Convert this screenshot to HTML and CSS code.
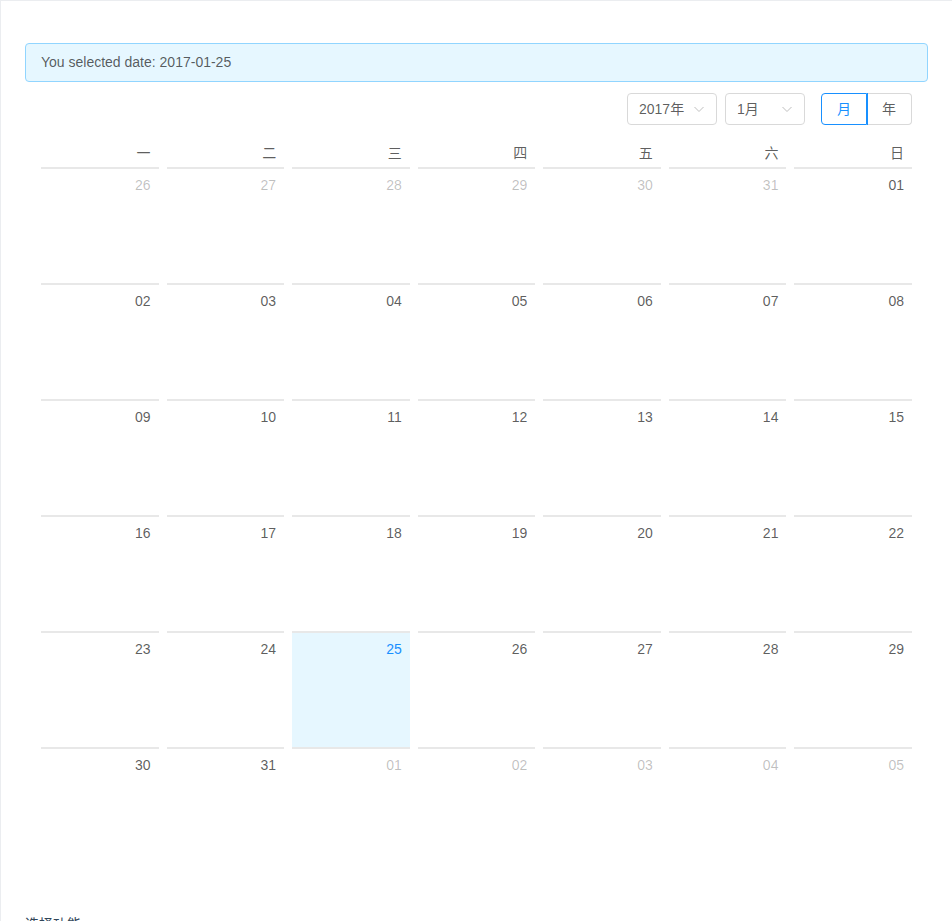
FILE: index.html
```html
<!DOCTYPE html>
<html lang="zh">
<head>
<meta charset="utf-8">
<title>Calendar</title>
<link rel="stylesheet" href="styles.css">
</head>
<body>
<div class="box">
  <div class="alert">You selected date: 2017-01-25</div>
  <div class="calendar">
    <div class="cal-header">
      <div class="select year-select"><span>2017年</span><svg class="arrow" viewBox="0 0 12 12"><path d="M1.5 4 L6 8.5 L10.5 4" fill="none" stroke="#bfbfbf" stroke-width="1"/></svg></div>
      <div class="select month-select"><span>1月</span><svg class="arrow" viewBox="0 0 12 12"><path d="M1.5 4 L6 8.5 L10.5 4" fill="none" stroke="#bfbfbf" stroke-width="1"/></svg></div>
      <div class="radio-group">
        <span class="radio-btn checked">月</span><span class="radio-btn">年</span>
      </div>
    </div>
    <div class="cal-body">
      <div class="grid">
        <div class="wd">一</div><div class="wd">二</div><div class="wd">三</div><div class="wd">四</div><div class="wd">五</div><div class="wd">六</div><div class="wd">日</div>

        <div class="cell other"><div class="val">26</div></div>
        <div class="cell other"><div class="val">27</div></div>
        <div class="cell other"><div class="val">28</div></div>
        <div class="cell other"><div class="val">29</div></div>
        <div class="cell other"><div class="val">30</div></div>
        <div class="cell other"><div class="val">31</div></div>
        <div class="cell"><div class="val">01</div></div>

        <div class="cell"><div class="val">02</div></div>
        <div class="cell"><div class="val">03</div></div>
        <div class="cell"><div class="val">04</div></div>
        <div class="cell"><div class="val">05</div></div>
        <div class="cell"><div class="val">06</div></div>
        <div class="cell"><div class="val">07</div></div>
        <div class="cell"><div class="val">08</div></div>

        <div class="cell"><div class="val">09</div></div>
        <div class="cell"><div class="val">10</div></div>
        <div class="cell"><div class="val">11</div></div>
        <div class="cell"><div class="val">12</div></div>
        <div class="cell"><div class="val">13</div></div>
        <div class="cell"><div class="val">14</div></div>
        <div class="cell"><div class="val">15</div></div>

        <div class="cell"><div class="val">16</div></div>
        <div class="cell"><div class="val">17</div></div>
        <div class="cell"><div class="val">18</div></div>
        <div class="cell"><div class="val">19</div></div>
        <div class="cell"><div class="val">20</div></div>
        <div class="cell"><div class="val">21</div></div>
        <div class="cell"><div class="val">22</div></div>

        <div class="cell"><div class="val">23</div></div>
        <div class="cell"><div class="val">24</div></div>
        <div class="cell selected"><div class="val">25</div></div>
        <div class="cell"><div class="val">26</div></div>
        <div class="cell"><div class="val">27</div></div>
        <div class="cell"><div class="val">28</div></div>
        <div class="cell"><div class="val">29</div></div>

        <div class="cell"><div class="val">30</div></div>
        <div class="cell"><div class="val">31</div></div>
        <div class="cell other"><div class="val">01</div></div>
        <div class="cell other"><div class="val">02</div></div>
        <div class="cell other"><div class="val">03</div></div>
        <div class="cell other"><div class="val">04</div></div>
        <div class="cell other"><div class="val">05</div></div>
      </div>
    </div>
  </div>
  <div class="meta-title">选择功能<span class="meta-icon">ዓ</span></div>
</div>
</body>
</html>
```

FILE: styles.css
```css
* { box-sizing: border-box; }
html, body { margin: 0; padding: 0; overflow: hidden; }
body {
  font-family: "Liberation Sans", Arial, "Noto Sans CJK SC", sans-serif;
  font-size: 14px;
  color: rgba(0,0,0,0.65);
  background: #fff;
}
.box {
  width: 952px;
  height: 960px;
  border: 1px solid #ebedf0;
  border-right: 0;
  padding: 42px 24px 0 24px;
}
.alert {
  background: #e6f7ff;
  border: 1px solid #91d5ff;
  border-radius: 4px;
  padding: 8px 15px;
  line-height: 21px;
  color: rgba(0,0,0,0.65);
}
.cal-header {
  display: flex;
  justify-content: flex-end;
  align-items: center;
  padding: 11px 16px 11px 0;
}
.select {
  height: 32px;
  border: 1px solid #d9d9d9;
  border-radius: 4px;
  display: flex;
  align-items: center;
  justify-content: space-between;
  padding: 0 11px;
  line-height: 30px;
}
.year-select { width: 90px; }
.month-select { width: 80px; margin-left: 8px; }
.arrow { width: 12px; height: 12px; display: block; }
.radio-group {
  display: flex;
  margin-left: 16px;
}
.radio-btn {
  height: 32px;
  line-height: 30px;
  padding: 0 15px;
  border: 1px solid #d9d9d9;
  color: rgba(0,0,0,0.65);
}
.radio-btn:first-child { border-radius: 4px 0 0 4px; }
.radio-btn:last-child { border-radius: 0 4px 4px 0; border-left: 0; }
.radio-btn.checked {
  border-color: #1890ff;
  color: #1890ff;
  position: relative;
  z-index: 1;
  box-shadow: 1px 0 0 0 #1890ff;
}
.cal-body { padding: 8px 12px; }
.grid {
  display: grid;
  grid-template-columns: repeat(7, 1fr);
}
.wd {
  text-align: right;
  padding-right: 12px;
  padding-bottom: 5px;
  line-height: 18px;
}
.cell {
  margin: 0 4px;
  height: 116px;
  border-top: 2px solid #e8e8e8;
  padding: 4px 8px 0;
  text-align: right;
}
.val { line-height: 25px; }
.cell.other .val { color: rgba(0,0,0,0.25); }
.cell.selected { background: #e6f7ff; }
.cell.selected .val { color: #1890ff; }
.meta-title {
  margin-top: 42px;
  line-height: 22px;
  color: #314659;
  font-size: 14px;
}
.meta-icon { font-size: 13px; color: #314659; margin-left: 8px; }
```
